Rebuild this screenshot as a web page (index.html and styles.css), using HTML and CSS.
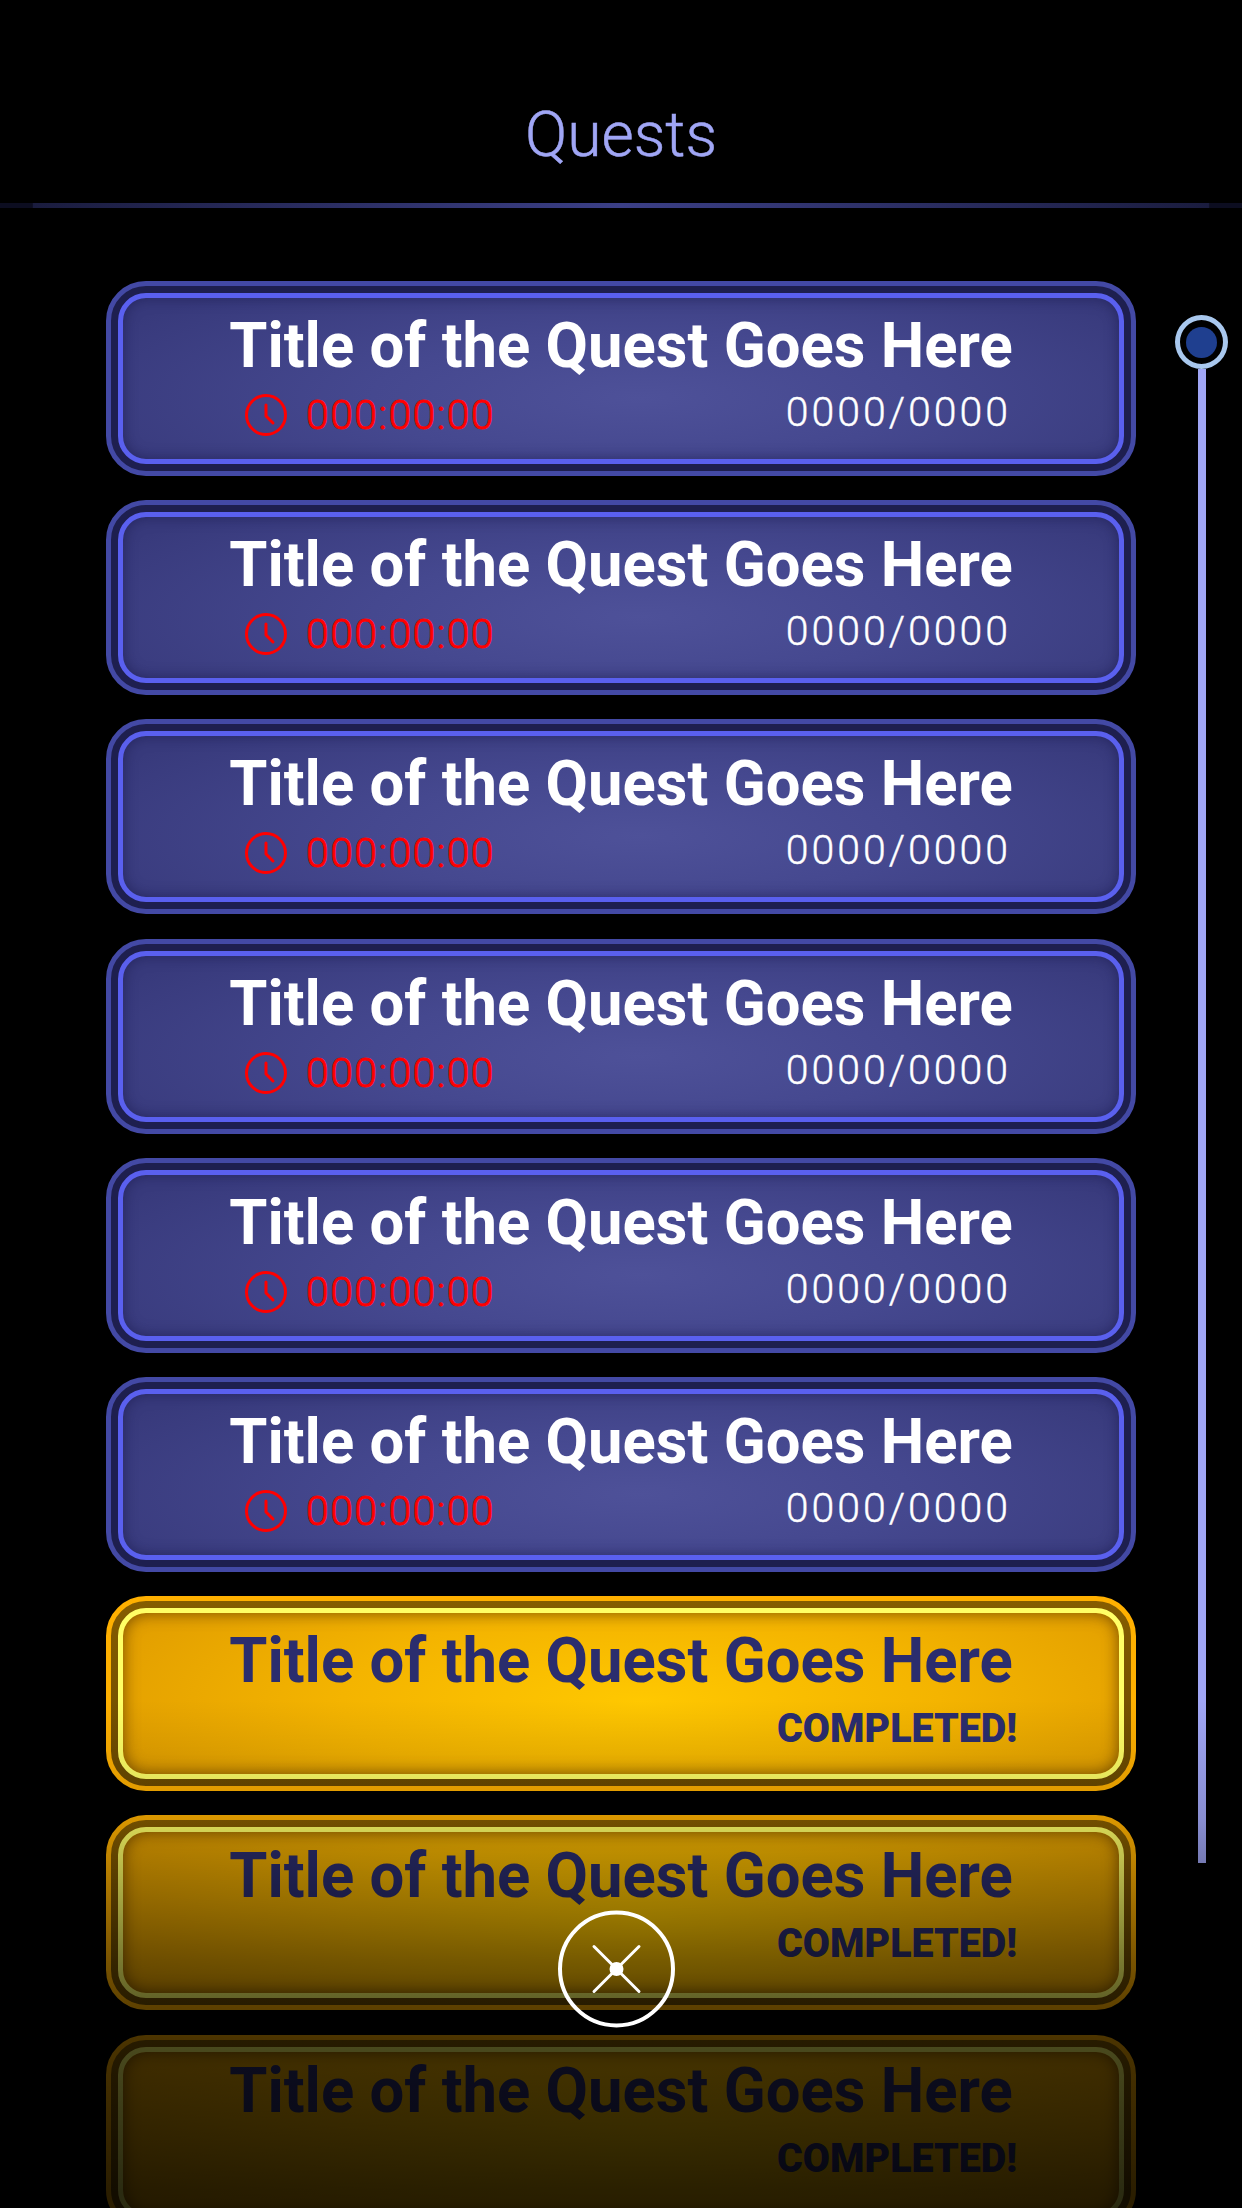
FILE: index.html
```html
<!DOCTYPE html>
<html lang="en">
<head>
<meta charset="utf-8">
<title>Quests</title>
<link rel="stylesheet" href="styles.css">
</head>
<body>
<div class="screen">
  <header class="header"><h1 class="heading">Quests</h1></header>
  <main class="body">
    <ul class="list">
      <li class="card"><div class="inner"><div class="title">Title of the Quest Goes Here</div><div class="meta"><div class="timer"><svg class="clock" viewBox="0 0 42 42"><circle cx="21" cy="21" r="19.5"/><path d="M21 11v11l7 7"/></svg><span>000:00:00</span></div><span class="count">0000/0000</span></div></div></li>
      <li class="card"><div class="inner"><div class="title">Title of the Quest Goes Here</div><div class="meta"><div class="timer"><svg class="clock" viewBox="0 0 42 42"><circle cx="21" cy="21" r="19.5"/><path d="M21 11v11l7 7"/></svg><span>000:00:00</span></div><span class="count">0000/0000</span></div></div></li>
      <li class="card"><div class="inner"><div class="title">Title of the Quest Goes Here</div><div class="meta"><div class="timer"><svg class="clock" viewBox="0 0 42 42"><circle cx="21" cy="21" r="19.5"/><path d="M21 11v11l7 7"/></svg><span>000:00:00</span></div><span class="count">0000/0000</span></div></div></li>
      <li class="card"><div class="inner"><div class="title">Title of the Quest Goes Here</div><div class="meta"><div class="timer"><svg class="clock" viewBox="0 0 42 42"><circle cx="21" cy="21" r="19.5"/><path d="M21 11v11l7 7"/></svg><span>000:00:00</span></div><span class="count">0000/0000</span></div></div></li>
      <li class="card"><div class="inner"><div class="title">Title of the Quest Goes Here</div><div class="meta"><div class="timer"><svg class="clock" viewBox="0 0 42 42"><circle cx="21" cy="21" r="19.5"/><path d="M21 11v11l7 7"/></svg><span>000:00:00</span></div><span class="count">0000/0000</span></div></div></li>
      <li class="card"><div class="inner"><div class="title">Title of the Quest Goes Here</div><div class="meta"><div class="timer"><svg class="clock" viewBox="0 0 42 42"><circle cx="21" cy="21" r="19.5"/><path d="M21 11v11l7 7"/></svg><span>000:00:00</span></div><span class="count">0000/0000</span></div></div></li>
      <li class="card done"><div class="inner"><div class="title">Title of the Quest Goes Here</div><div class="meta meta-done"><span class="completed">COMPLETED!</span></div></div></li>
      <li class="card done lift-1"><div class="inner"><div class="title">Title of the Quest Goes Here</div><div class="meta meta-done"><span class="completed">COMPLETED!</span></div></div></li>
      <li class="card done lift-2"><div class="inner"><div class="title">Title of the Quest Goes Here</div><div class="meta meta-done"><span class="completed">COMPLETED!</span></div></div></li>
    </ul>
    <div class="scroll"><div class="thumb"></div><div class="track"></div></div>
  </main>
  <div class="fade"></div>
  <button class="close" aria-label="Close"><svg viewBox="0 0 117 117"><circle cx="58.5" cy="58.5" r="56.5"/><path d="M36 36l45 45M81 36L36 81"/><circle class="hub" cx="58.5" cy="58.5" r="7"/></svg></button>
</div>
</body>
</html>
```
FILE: styles.css
```css
* { box-sizing: border-box; }
html, body { margin: 0; padding: 0; background: #000; }
.screen { position: relative; width: 1242px; height: 2208px; overflow: hidden; background: #000; font-family: "Roboto", sans-serif; }

.header { height: 208px; display: flex; align-items: flex-start; justify-content: center; position: relative; padding-top: 99px; }
.header::after { content: ""; position: absolute; left: 0; right: 0; bottom: 0; height: 5px;
  background: linear-gradient(90deg, #0c0d20 0, #0c0d20 2.6%, #1a1c3e 2.7%, #3b3f86 50%, #1a1c3e 97.3%, #0c0d20 97.4%, #0c0d20 100%); }
.heading { margin: 0; font-size: 63px; line-height: 72px; font-weight: 300; color: #a0a6f5; transform: scaleX(.99); -webkit-text-stroke: .5px #a0a6f5; }

.body { display: flex; align-items: flex-start; padding: 73px 0 0 106px; }
.list { list-style: none; margin: 0; padding: 0; width: 1030px; display: flex; flex-direction: column; gap: 24.2px; flex: none; }

.card { height: 195px; padding: 7px; border: 5px solid #4349a5; border-radius: 40px; background: #1e1f4f; flex: none; }
.inner { height: 100%; border: 5px solid #5a60ef; border-radius: 28px; padding: 12px 0 0;
  background: radial-gradient(ellipse 60% 90% at 52% 62%, #4e5199 0, #45488f 45%, #383a7c 100%);
  box-shadow: inset 0 0 14px rgba(20, 20, 70, .55); }
.title { font-size: 63px; line-height: 72px; font-weight: 700; color: #fff; text-align: center; white-space: nowrap; transform: scaleX(.978); }

.meta { display: flex; justify-content: space-between; align-items: center; padding: 0 108px 0 122px; margin-top: 12px; }
.timer { display: flex; align-items: center; gap: 19px; color: #f00; font-size: 41px; line-height: 42px; font-weight: 300; letter-spacing: 1.4px; -webkit-text-stroke: .8px #f00; }
.clock { width: 42px; height: 42px; flex: none; fill: none; stroke: #f00; stroke-width: 3; stroke-linecap: round; stroke-linejoin: round; }
.count { color: #fff; font-size: 41px; line-height: 42px; font-weight: 300; letter-spacing: 3px; margin-top: -6px; -webkit-text-stroke: .4px #fff; }

.done { background: linear-gradient(#855c00, #6b4a00); border-color: #ffb000; }
.done .inner { border-color: #ffff66; box-shadow: inset 0 0 16px rgba(90, 55, 0, .8);
  background: radial-gradient(ellipse 60% 110% at 52% 55%, #ffc800 0, #f4b400 50%, #e09c00 100%); }
.done .title { color: #2b2d6e; }
.lift-1 .inner { padding-top: 8px; }
.lift-2 .inner { padding-top: 3px; }
.meta-done { justify-content: flex-end; padding: 0 102px 0 0; margin-top: 10px; }
.completed { color: #2b2d6e; font-size: 41px; line-height: 42px; font-weight: 900; transform: scaleX(.96); transform-origin: right center; }

.scroll { display: flex; flex-direction: column; align-items: center; margin: 34px 0 0 39px; flex: none; width: 53px; }
.thumb { width: 53px; height: 54px; border-radius: 50%; border: 5px solid #a9c8ee; background: #000; display: flex; align-items: center; justify-content: center; }
.thumb::after { content: ""; width: 31px; height: 31px; border-radius: 50%; background: #1f3f8f; }
.track { width: 8px; height: 1494px; background: #a0a6f5; }

.fade { position: absolute; left: 0; right: 0; top: 1700px; bottom: 0; pointer-events: none;
  background: linear-gradient(rgba(0,0,0,0) 0, rgba(0,0,0,.15) 23.6%, rgba(0,0,0,.26) 31.5%, rgba(0,0,0,.52) 51%, rgba(0,0,0,.71) 67%, rgba(0,0,0,.83) 96.5%); }
.close { position: absolute; left: 558px; top: 1910px; width: 117px; height: 118px; padding: 0; border: 0; background: none; }
.close svg { display: block; width: 100%; height: 100%; fill: none; stroke: #fff; stroke-width: 4; }
.close path { stroke-width: 3; stroke-linecap: round; }
.close .hub { fill: #fff; stroke: none; }
```
